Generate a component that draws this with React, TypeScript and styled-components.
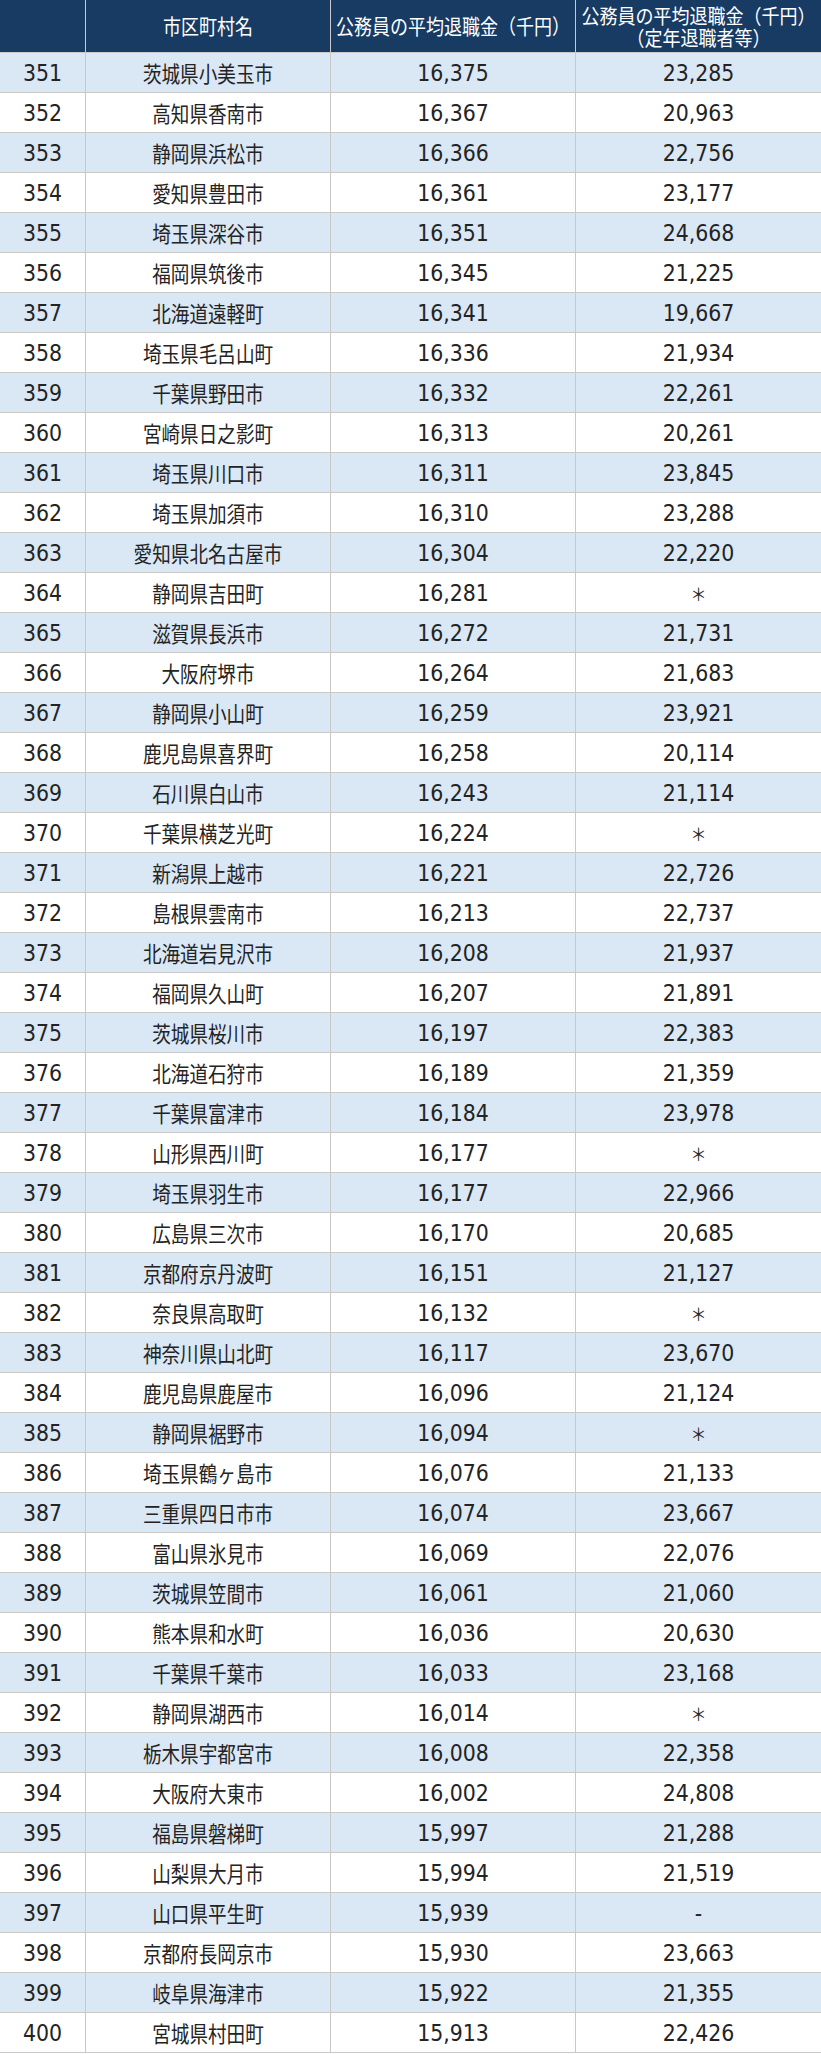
import styled, { createGlobalStyle } from 'styled-components';

type Row = [number, string, string, string];

const rows: Row[] = [
	[351, '茨城県小美玉市', '16,375', '23,285'],
	[352, '高知県香南市', '16,367', '20,963'],
	[353, '静岡県浜松市', '16,366', '22,756'],
	[354, '愛知県豊田市', '16,361', '23,177'],
	[355, '埼玉県深谷市', '16,351', '24,668'],
	[356, '福岡県筑後市', '16,345', '21,225'],
	[357, '北海道遠軽町', '16,341', '19,667'],
	[358, '埼玉県毛呂山町', '16,336', '21,934'],
	[359, '千葉県野田市', '16,332', '22,261'],
	[360, '宮崎県日之影町', '16,313', '20,261'],
	[361, '埼玉県川口市', '16,311', '23,845'],
	[362, '埼玉県加須市', '16,310', '23,288'],
	[363, '愛知県北名古屋市', '16,304', '22,220'],
	[364, '静岡県吉田町', '16,281', '＊'],
	[365, '滋賀県長浜市', '16,272', '21,731'],
	[366, '大阪府堺市', '16,264', '21,683'],
	[367, '静岡県小山町', '16,259', '23,921'],
	[368, '鹿児島県喜界町', '16,258', '20,114'],
	[369, '石川県白山市', '16,243', '21,114'],
	[370, '千葉県横芝光町', '16,224', '＊'],
	[371, '新潟県上越市', '16,221', '22,726'],
	[372, '島根県雲南市', '16,213', '22,737'],
	[373, '北海道岩見沢市', '16,208', '21,937'],
	[374, '福岡県久山町', '16,207', '21,891'],
	[375, '茨城県桜川市', '16,197', '22,383'],
	[376, '北海道石狩市', '16,189', '21,359'],
	[377, '千葉県富津市', '16,184', '23,978'],
	[378, '山形県西川町', '16,177', '＊'],
	[379, '埼玉県羽生市', '16,177', '22,966'],
	[380, '広島県三次市', '16,170', '20,685'],
	[381, '京都府京丹波町', '16,151', '21,127'],
	[382, '奈良県高取町', '16,132', '＊'],
	[383, '神奈川県山北町', '16,117', '23,670'],
	[384, '鹿児島県鹿屋市', '16,096', '21,124'],
	[385, '静岡県裾野市', '16,094', '＊'],
	[386, '埼玉県鶴ヶ島市', '16,076', '21,133'],
	[387, '三重県四日市市', '16,074', '23,667'],
	[388, '富山県氷見市', '16,069', '22,076'],
	[389, '茨城県笠間市', '16,061', '21,060'],
	[390, '熊本県和水町', '16,036', '20,630'],
	[391, '千葉県千葉市', '16,033', '23,168'],
	[392, '静岡県湖西市', '16,014', '＊'],
	[393, '栃木県宇都宮市', '16,008', '22,358'],
	[394, '大阪府大東市', '16,002', '24,808'],
	[395, '福島県磐梯町', '15,997', '21,288'],
	[396, '山梨県大月市', '15,994', '21,519'],
	[397, '山口県平生町', '15,939', '-'],
	[398, '京都府長岡京市', '15,930', '23,663'],
	[399, '岐阜県海津市', '15,922', '21,355'],
	[400, '宮城県村田町', '15,913', '22,426'],
];

const GlobalStyle = createGlobalStyle`
	html, body {
		margin: 0;
		padding: 0;
		background: #ffffff;
	}
	body {
		font-family: "Noto Sans CJK JP", "Noto Sans", sans-serif;
		color: #232323;
	}
`;

// 列幅: 順位 / 市区町村名 / 平均退職金 / 定年退職者等
const GRID = '86px 245px 245px 245px';
const BORDER = '#c9c9c9';

const Table = styled.div`
	width: 821px;
	display: flex;
	flex-direction: column;
`;

const HeaderRow = styled.div`
	display: grid;
	grid-template-columns: ${GRID};
	height: 53px;
	background-color: #173b63;
	color: #ffffff;
	border-bottom: 1px solid ${BORDER};
	box-sizing: border-box;
`;

const HeaderCell = styled.div`
	display: flex;
	align-items: center;
	justify-content: center;
	text-align: center;
	font-size: 18px;
	line-height: 19.5px;
	white-space: nowrap;
	border-right: 1px solid ${BORDER};
	box-sizing: border-box;

	&:last-child {
		border-right: none;
	}
`;

const BodyRow = styled.div<{ $striped: boolean }>`
	display: grid;
	grid-template-columns: ${GRID};
	height: 40px;
	background-color: ${(props) => (props.$striped ? '#dae7f5' : '#ffffff')};
	border-bottom: 1px solid ${BORDER};
	box-sizing: border-box;
`;

const Cell = styled.div<{ $numeric?: boolean }>`
	display: flex;
	align-items: center;
	justify-content: center;
	padding-top: 2px;
	font-family: ${(props) =>
		props.$numeric
			? '"DejaVu Sans", "Noto Sans CJK JP", sans-serif'
			: '"Noto Sans CJK JP", sans-serif'};
	font-size: ${(props) => (props.$numeric ? '20.5px' : '18.6px')};
	line-height: 1;
	border-right: 1px solid ${BORDER};
	box-sizing: border-box;
	white-space: nowrap;

	&:last-child {
		border-right: none;
	}
`;

// 元画像の文字は縦にやや伸びているので合わせる
const Tall = styled.span<{ $scale?: number }>`
	display: inline-block;
	transform: scaleY(${(props) => props.$scale ?? 1.16});
`;

const Mark = styled.span`
	font-family: "Noto Sans CJK JP", sans-serif;
	font-size: 16px;
`;

const renderValue = (value: string) =>
	value === '＊' ? <Mark>{value}</Mark> : value;

const App: React.FC = () => {
	return (
		<>
			<GlobalStyle />
			<Table>
				<HeaderRow>
					<HeaderCell />
					<HeaderCell>
						<Tall>市区町村名</Tall>
					</HeaderCell>
					<HeaderCell>
						<Tall>公務員の平均退職金（千円）</Tall>
					</HeaderCell>
					<HeaderCell>
						<Tall $scale={1.12}>
							公務員の平均退職金（千円）
							<br />
							（定年退職者等）
						</Tall>
					</HeaderCell>
				</HeaderRow>
				{rows.map((row, i) => (
					<BodyRow key={row[0]} $striped={i % 2 === 0}>
						<Cell $numeric>
							<Tall $scale={1.1}>{row[0]}</Tall>
						</Cell>
						<Cell>
							<Tall>{row[1]}</Tall>
						</Cell>
						<Cell $numeric>
							<Tall $scale={1.1}>{row[2]}</Tall>
						</Cell>
						<Cell $numeric>
							<Tall $scale={1.1}>{renderValue(row[3])}</Tall>
						</Cell>
					</BodyRow>
				))}
			</Table>
		</>
	);
};

export default App;
